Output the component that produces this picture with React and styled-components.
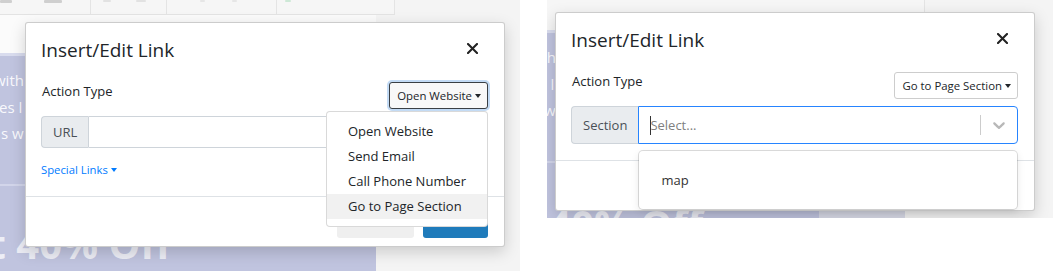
import styled, { createGlobalStyle } from "styled-components";

const GlobalStyle = createGlobalStyle`
  html, body { margin: 0; padding: 0; background: #fff; }
  body { font-family: "Open Sans", "Noto Sans", sans-serif; color: #212529; }
  * { box-sizing: border-box; }
`;

const Page = styled.div`
  display: flex;
  align-items: flex-start;
  width: 1053px;
  height: 271px;
  overflow: hidden;
  background: #fff;
`;

const Shot = styled.div`
  position: relative;
  flex: none;
  width: ${(p) => p.$w}px;
  height: ${(p) => p.$h}px;
  overflow: hidden;
  background: #f4f4f4;
  display: flex;
  flex-direction: column;
`;

const Gap = styled.div`
  flex: none;
  width: ${(p) => p.$w}px;
`;

/* ---------- page behind the dialog ---------- */

const Toolbar = styled.div`
  flex: none;
  display: flex;
  width: ${(p) => p.$w}px;
  height: ${(p) => p.$h}px;
  background: #f6f6f6;
  border-bottom: ${(p) => (p.$line ? "1px solid #e3e3e3" : "0")};
`;

const ToolGroup = styled.div`
  flex: none;
  display: flex;
  align-items: flex-start;
  width: ${(p) => p.$w}px;
  border-right: 1px solid #e4e4e4;
`;

const ToolMark = styled.span`
  flex: none;
  height: ${(p) => p.$h || 3}px;
  width: ${(p) => p.$w}px;
  margin-left: ${(p) => p.$x}px;
  background: ${(p) => p.$c || "#cfcfcf"};
  border-radius: 1px;
`;

const Stage = styled.div`
  flex: 1;
  display: flex;
  align-items: stretch;
`;

const Column = styled.div`
  flex: none;
  width: ${(p) => p.$w}px;
  display: flex;
  flex-direction: column;
`;

const WhiteGap = styled.div`
  flex: none;
  height: ${(p) => p.$h}px;
  background: #fbfbfb;
`;

const Banner = styled.div`
  flex: 1;
  position: relative;
  background: #c0c4df;
  border-top: 3px solid #d9dcee;
  overflow: hidden;
  color: rgba(255, 255, 255, 0.93);
  padding-top: 11px;
`;

const BannerLine = styled.div`
  font-size: 15px;
  line-height: 26.6px;
  white-space: nowrap;
  margin-left: ${(p) => p.$x}px;
`;

const BannerRule = styled.div`
  margin-top: 37px;
  height: 2px;
  background: #d2d5ea;
`;

const BigText = styled.div`
  margin-top: ${(p) => p.$top}px;
  font-size: 40px;
  font-weight: 700;
  line-height: 48px;
  white-space: nowrap;
  color: rgba(255, 255, 255, 0.72);
  margin-left: ${(p) => p.$x}px;
`;

const BannerBadge = styled.div`
  position: absolute;
  right: 0;
  top: 178px;
  width: 86px;
  height: 40px;
  background: #d9dbe8;
`;

/* ---------- dialog ---------- */

const Dialog = styled.div`
  position: absolute;
  left: ${(p) => p.$x}px;
  top: ${(p) => p.$y}px;
  width: 480px;
  background: #fff;
  border: 1px solid rgba(0, 0, 0, 0.2);
  border-radius: 3px;
  box-shadow: 0 5px 15px rgba(0, 0, 0, 0.17);
  display: flex;
  flex-direction: column;
`;

const Header = styled.div`
  display: flex;
  justify-content: space-between;
  align-items: flex-start;
  padding: 14px 16px 3px 15px;
`;

const Title = styled.h5`
  margin: 0;
  font-size: 19px;
  font-weight: 400;
  line-height: 26px;
  color: #212529;
`;

const CloseButton = styled.button`
  flex: none;
  width: 11px;
  height: 11px;
  margin: 6px 10px 0 0;
  padding: 0;
  border: 0;
  background: none;
  display: flex;
`;

const Body = styled.div`
  padding: 16px 16px 16px 15px;
`;

const Row = styled.div`
  display: flex;
  justify-content: space-between;
  align-items: flex-start;
  margin-bottom: 7px;
`;

const Label = styled.div`
  font-size: 13px;
  line-height: 18px;
  padding-left: 1px;
`;

const DropWrap = styled.div`
  position: relative;
`;

const Toggle = styled.button`
  height: 27px;
  padding: 0 6px 0 7px;
  display: inline-flex;
  align-items: center;
  font-family: inherit;
  font-size: 11.4px;
  color: #212529;
  background: ${(p) => (p.$focus ? "#f8f8f8" : "#fff")};
  border: 1px solid ${(p) => (p.$focus ? "#3a3f44" : "#cdcdcd")};
  border-radius: 3px;
  box-shadow: ${(p) => (p.$focus ? "0 0 0 2px #c3dbf5" : "none")};
`;

const Caret = styled.span`
  display: inline-block;
  width: 0;
  height: 0;
  margin-left: ${(p) => p.$gap || 3}px;
  border-top: 4px solid currentColor;
  border-left: 3.5px solid transparent;
  border-right: 3.5px solid transparent;
`;

const Menu = styled.div`
  position: absolute;
  z-index: 2;
  top: calc(100% + 2px);
  right: 0;
  min-width: 162px;
  padding: 7px 0;
  background: #fff;
  border: 1px solid rgba(0, 0, 0, 0.15);
  border-radius: 4px;
`;

const MenuItem = styled.div`
  padding: 4px 21px;
  font-size: 13px;
  line-height: 17px;
  white-space: nowrap;
  color: #212529;
  background: ${(p) => (p.$active ? "#f1f1f1" : "transparent")};
`;

const InputGroup = styled.div`
  display: flex;
  height: ${(p) => p.$h}px;
`;

const Addon = styled.div`
  flex: none;
  display: flex;
  align-items: center;
  padding: 0 11px;
  font-size: 13px;
  color: #495057;
  background: #e9ecef;
  border: 1px solid #ced4da;
  border-right: 0;
  border-radius: 4px 0 0 4px;
`;

const TextInput = styled.div`
  flex: 1;
  border: 1px solid #ced4da;
  border-radius: 0 4px 4px 0;
  background: #fff;
`;

const Select = styled.div`
  flex: 1;
  position: relative;
  display: flex;
  align-items: center;
  background: #fff;
  border: 1px solid #2684ff;
  border-radius: 0 4px 4px 0;
`;

const ValueBox = styled.div`
  flex: 1;
  display: flex;
  align-items: center;
  padding: 0 11px;
  font-size: 13px;
  color: #808080;
`;

const TextCaret = styled.span`
  flex: none;
  width: 1px;
  height: 19px;
  margin-right: -1px;
  background: #333;
`;

const Separator = styled.span`
  flex: none;
  width: 1px;
  height: 20px;
  background: #cccccc;
`;

const Indicator = styled.div`
  flex: none;
  width: 36px;
  display: flex;
  justify-content: center;
  color: #b8b8b8;
`;

const SelectMenu = styled.div`
  position: absolute;
  z-index: 2;
  top: calc(100% + 8px);
  left: 0;
  right: 0;
  padding: 4px 0;
  background: #fff;
  border-radius: 4px;
  box-shadow: 0 0 0 1px rgba(0, 0, 0, 0.13), 0 3px 8px rgba(0, 0, 0, 0.1);
`;

const Option = styled.div`
  padding: 16px 22px;
  font-size: 13px;
  line-height: 18px;
  color: #333;
`;

const SpecialLinks = styled.div`
  margin-top: 11px;
  font-size: 11.3px;
  line-height: 21px;
  color: #007bff;
  display: flex;
  align-items: center;
`;

const Footer = styled.div`
  display: flex;
  justify-content: flex-end;
  gap: 9px;
  min-height: 50px;
  padding: 9px 16px 8px;
  border-top: 1px solid #dee2e6;
`;

const FooterButton = styled.button`
  width: ${(p) => p.$w}px;
  height: 32px;
  border: 0;
  border-radius: 3px;
  background: ${(p) => (p.$primary ? "#1f7bbb" : "#efefef")};
`;

const CloseIcon = () => (
  <svg width="11" height="11" viewBox="0 0 11 11">
    <path d="M1 1L10 10M10 1L1 10" stroke="#222" strokeWidth="2.1" strokeLinecap="round" />
  </svg>
);

const Chevron = () => (
  <svg width="20" height="20" viewBox="0 0 20 20" fill="currentColor">
    <path d="M4.516 7.548c0.436-0.446 1.043-0.481 1.576 0l3.908 3.747 3.908-3.747c0.533-0.481 1.141-0.446 1.574 0 0.436 0.445 0.408 1.197 0 1.615-0.406 0.418-4.695 4.502-4.695 4.502-0.217 0.223-0.502 0.335-0.787 0.335s-0.57-0.112-0.789-0.335c0 0-4.287-4.084-4.695-4.502s-0.436-1.17 0-1.615z" />
  </svg>
);

const actions = ["Open Website", "Send Email", "Call Phone Number", "Go to Page Section"];

const BannerText = ({ shift, bigTop }) => (
  <>
    <BannerLine $x={-6 + shift}>with</BannerLine>
    <BannerLine $x={-1 + shift}>es l</BannerLine>
    <BannerLine $x={1 + shift}>s w</BannerLine>
    <BannerRule />
    <BigText $x={-64 + shift} $top={bigTop}>
      Get 40% Off
    </BigText>
  </>
);

const App = () => {
  return (
    <Page>
      <GlobalStyle />

      <Shot $w={520} $h={271}>
        <Toolbar $w={395} $h={15} $line>
          <ToolGroup $w={91}>
            <ToolMark $x={0} $w={12} />
            <ToolMark $x={32} $w={18} />
          </ToolGroup>
          <ToolGroup $w={76}>
            <ToolMark $x={12} $w={8} $h={2} $c="#e2e2e2" />
            <ToolMark $x={25} $w={10} $h={2} $c="#e2e2e2" />
          </ToolGroup>
          <ToolGroup $w={110}>
            <ToolMark $x={33} $w={5} $h={2} $c="#e6e6e6" />
            <ToolMark $x={27} $w={5} $h={2} $c="#e6e6e6" />
          </ToolGroup>
          <ToolGroup $w={118}>
            <ToolMark $x={8} $w={6} $h={2} $c="#cde8d6" />
          </ToolGroup>
        </Toolbar>
        <Stage>
          <Column $w={376}>
            <WhiteGap $h={38} />
            <Banner>
              <BannerText shift={0} bigTop={34} />
            </Banner>
          </Column>
        </Stage>

        <Dialog $x={25} $y={22}>
          <Header>
            <Title>Insert/Edit Link</Title>
            <CloseButton aria-label="Close">
              <CloseIcon />
            </CloseButton>
          </Header>
          <Body>
            <Row>
              <Label>Action Type</Label>
              <DropWrap>
                <Toggle $focus>
                  Open Website
                  <Caret />
                </Toggle>
                <Menu>
                  {actions.map((a, i) => (
                    <MenuItem key={a} $active={i === 3}>
                      {a}
                    </MenuItem>
                  ))}
                </Menu>
              </DropWrap>
            </Row>
            <InputGroup $h={32}>
              <Addon>URL</Addon>
              <TextInput />
            </InputGroup>
            <SpecialLinks>
              Special Links
              <Caret $gap={3} />
            </SpecialLinks>
          </Body>
          <Footer>
            <FooterButton $w={77} aria-label="Cancel" />
            <FooterButton $w={65} $primary aria-label="Save" />
          </Footer>
        </Dialog>
      </Shot>

      <Gap $w={27} />

      <Shot $w={506} $h={218}>
        <Toolbar $w={378} $h={30}>
          <ToolGroup $w={378} />
        </Toolbar>
        <Stage>
          <Column $w={358}>
            <Banner>
              <BannerText shift={-15} bigTop={37} />
              <BannerBadge />
            </Banner>
          </Column>
        </Stage>

        <Dialog $x={8} $y={12}>
          <Header>
            <Title>Insert/Edit Link</Title>
            <CloseButton aria-label="Close">
              <CloseIcon />
            </CloseButton>
          </Header>
          <Body>
            <Row>
              <Label>Action Type</Label>
              <DropWrap>
                <Toggle>
                  Go to Page Section
                  <Caret />
                </Toggle>
              </DropWrap>
            </Row>
            <InputGroup $h={38}>
              <Addon>Section</Addon>
              <Select>
                <ValueBox>
                  <TextCaret />
                  Select...
                </ValueBox>
                <Separator />
                <Indicator>
                  <Chevron />
                </Indicator>
                <SelectMenu>
                  <Option>map</Option>
                </SelectMenu>
              </Select>
            </InputGroup>
          </Body>
          <Footer />
        </Dialog>
      </Shot>
    </Page>
  );
};

export default App;
